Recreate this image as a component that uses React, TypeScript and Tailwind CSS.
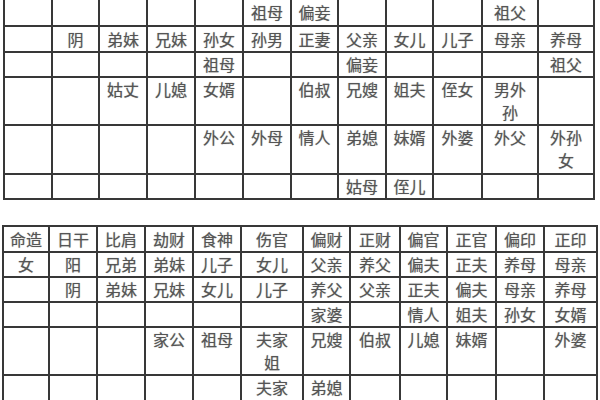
import React from "react";

type Row = { h: string; tall?: boolean; cells: string[] };

const topCols =
  "grid-cols-[46px_45px_46px_46px_46px_46px_45px_46px_45px_47px_54px_54px]";
const bottomCols =
  "grid-cols-[44px_46px_46px_46px_46px_60px_45px_48px_45px_47px_46px_51px]";

const topRows: Row[] = [
  { h: "h-[25px]", cells: ["", "", "", "", "", "祖母", "偏妾", "", "", "", "祖父", ""] },
  { h: "h-[24px]", cells: ["", "阴", "弟妹", "兄妹", "孙女", "孙男", "正妻", "父亲", "女儿", "儿子", "母亲", "养母"] },
  { h: "h-[23px]", cells: ["", "", "", "", "祖母", "", "", "偏妾", "", "", "", "祖父"] },
  { h: "h-[46px]", tall: true, cells: ["", "", "姑丈", "儿媳", "女婿", "", "伯叔", "兄嫂", "姐夫", "侄女", "男外孙", ""] },
  { h: "h-[47px]", tall: true, cells: ["", "", "", "", "外公", "外母", "情人", "弟媳", "妹婿", "外婆", "外父", "外孙女"] },
  { h: "h-[23px]", cells: ["", "", "", "", "", "", "", "姑母", "侄儿", "", "", ""] },
];

const bottomRows: Row[] = [
  { h: "h-[24px]", cells: ["命造", "日干", "比肩", "劫财", "食神", "伤官", "偏财", "正财", "偏官", "正官", "偏印", "正印"] },
  { h: "h-[23px]", cells: ["女", "阳", "兄弟", "弟妹", "儿子", "女儿", "父亲", "养父", "偏夫", "正夫", "养母", "母亲"] },
  { h: "h-[23px]", cells: ["", "阴", "弟妹", "兄妹", "女儿", "儿子", "养父", "父亲", "正夫", "偏夫", "母亲", "养母"] },
  { h: "h-[23px]", cells: ["", "", "", "", "", "", "家婆", "", "情人", "姐夫", "孙女", "女婿"] },
  { h: "h-[46px]", tall: true, cells: ["", "", "", "家公", "祖母", "夫家姐", "兄嫂", "伯叔", "儿媳", "妹婿", "", "外婆"] },
  { h: "h-[48px]", tall: true, cells: ["", "", "", "", "", "夫家兄", "弟媳", "", "", "", "", ""] },
];

function Grid({ cols, rows }: { cols: string; rows: Row[] }) {
  return (
    <div className={`grid ${cols} gap-[2px] bg-[#383838] p-[2px] w-max`}>
      {rows.map((r, ri) =>
        r.cells.map((c, ci) => (
          <div
            key={`${ri}-${ci}`}
            className={`${r.h} bg-white flex justify-center overflow-hidden ${
              r.tall ? "items-start" : "items-center"
            }`}
          >
            <span className="block max-w-[34px] text-center text-[16px] leading-[23px] text-[#555555] [text-shadow:0_0_1px_#9a9a9a] break-all">
              {c}
            </span>
          </div>
        ))
      )}
    </div>
  );
}

export default function App() {
  return (
    <div
      className="w-[600px] h-[400px] overflow-hidden bg-white"
      style={{ fontFamily: '"Noto Sans CJK SC", "Noto Sans", sans-serif' }}
    >
      <div className="ml-[3px] mt-[-2px]">
        <Grid cols={topCols} rows={topRows} />
      </div>
      <div className="ml-[2px] mt-[25px]">
        <Grid cols={bottomCols} rows={bottomRows} />
      </div>
    </div>
  );
}
